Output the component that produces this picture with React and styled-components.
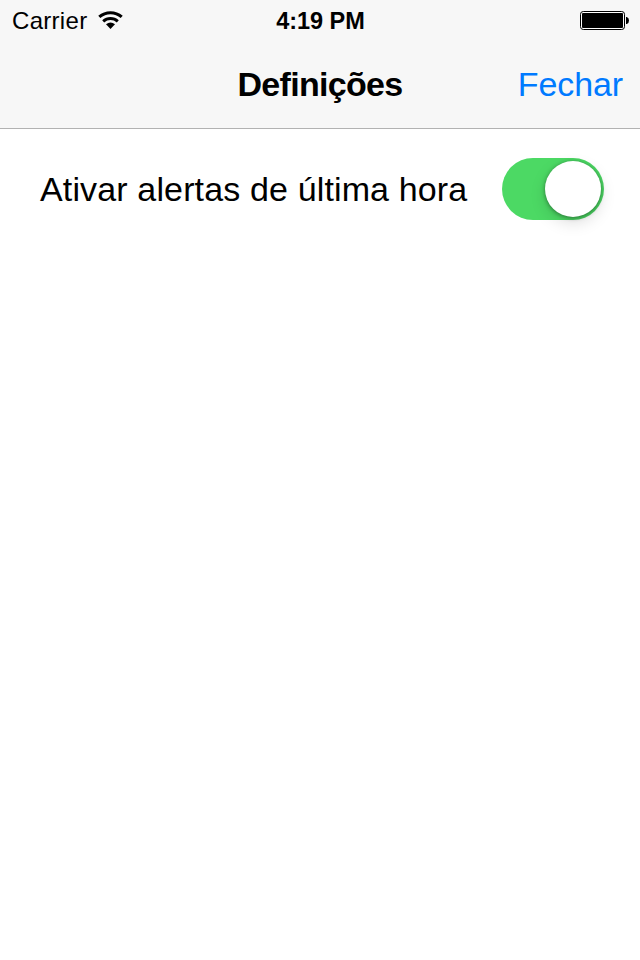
import React, { useState } from 'react'
import styled, { createGlobalStyle } from 'styled-components'

const GlobalStyle = createGlobalStyle`
  body {
    margin: 0;
    background: #fff;
    color: #000;
    font-family: 'Liberation Sans', Arial, sans-serif;
  }
  * {
    box-sizing: border-box;
  }
`

const WifiIcon = () => (
  <svg width="25" height="18" viewBox="0 0 25 18" fill="none" stroke="#000">
    <path d="M1.3 5.9a17 17 0 0 1 22.4 0" strokeWidth="3.1" />
    <path d="M5.2 10.3a11 11 0 0 1 14.6 0" strokeWidth="3" />
    <path d="M8 13.3q4.5-3.4 9 0L12.5 18z" fill="#000" stroke="none" />
  </svg>
)

const BatteryIcon = () => (
  <svg width="49" height="19" viewBox="0 0 49 19">
    <rect x="0.5" y="0.5" width="44" height="18" rx="2.8" fill="#fff" stroke="#000" />
    <rect x="2" y="2" width="41" height="15" rx="1" />
    <path d="M46 6h.8q2.2.8 2.2 3.5t-2.2 3.5H46z" />
  </svg>
)

const Switch = ({ on, label, onChange }) => (
  <Track
    type="button"
    role="switch"
    aria-checked={on}
    aria-label={label}
    $on={on}
    onClick={() => onChange(!on)}
  >
    <Knob />
  </Track>
)

const App = () => {
  const [alerts, setAlerts] = useState(true)

  return (
    <Screen>
      <GlobalStyle />
      <Header>
        <StatusBar>
          <Carrier>
            <span>Carrier</span>
            <WifiIcon />
          </Carrier>
          <Time>4:19 PM</Time>
          <Battery>
            <BatteryIcon />
          </Battery>
        </StatusBar>
        <NavBar>
          <Title>Definições</Title>
          <CloseButton type="button">Fechar</CloseButton>
        </NavBar>
      </Header>
      <SettingRow>
        <SettingLabel>Ativar alertas de última hora</SettingLabel>
        <Switch
          on={alerts}
          label="Ativar alertas de última hora"
          onChange={setAlerts}
        />
      </SettingRow>
    </Screen>
  )
}

export default App

const Screen = styled.div`
  width: 640px;
  height: 960px;
  overflow: hidden;
  background: #fff;
`

const Header = styled.header`
  height: 129px;
  background: #f7f7f7;
  border-bottom: 1px solid #b2b2b2;
`

const StatusBar = styled.div`
  display: grid;
  grid-template-columns: 1fr auto 1fr;
  align-items: start;
  height: 40px;
  padding: 7px 11px 0 12px;
  font-size: 24px;
  line-height: 28px;
`

const Carrier = styled.div`
  display: flex;
  gap: 11px;
  letter-spacing: 0.3px;
  svg {
    margin-top: 4px;
  }
`

const Time = styled.div`
  font-size: 23.5px;
  font-weight: bold;
  letter-spacing: -0.05px;
`

const Battery = styled.div`
  display: flex;
  justify-content: flex-end;
  padding-top: 4px;
`

const NavBar = styled.div`
  display: grid;
  grid-template-columns: 1fr auto 1fr;
  align-items: center;
  height: 88px;
  padding: 0 17px;
`

const Title = styled.h1`
  grid-column: 2;
  margin: 0;
  font-size: 34px;
  line-height: 40px;
  letter-spacing: -0.7px;
`

const CloseButton = styled.button`
  justify-self: end;
  padding: 0;
  border: 0;
  background: none;
  color: #007aff;
  font: inherit;
  font-size: 34px;
  line-height: 40px;
  letter-spacing: -0.1px;
`

const SettingRow = styled.div`
  display: flex;
  align-items: center;
  justify-content: space-between;
  padding: 29px 36px 0 40px;
`

const SettingLabel = styled.span`
  font-size: 34px;
  line-height: 40px;
  letter-spacing: 0.14px;
  white-space: nowrap;
`

const Track = styled.button`
  display: flex;
  align-items: center;
  justify-content: ${props => (props.$on ? 'flex-end' : 'flex-start')};
  width: 102px;
  height: 62px;
  padding: 0 3px;
  border: 0;
  border-radius: 31px;
  background: ${props => (props.$on ? '#4cd964' : '#e5e5e5')};
`

const Knob = styled.span`
  width: 56px;
  height: 56px;
  border-radius: 50%;
  background: #fff;
  box-shadow: 0 1px 4px rgba(0, 0, 0, 0.4), 0 6px 16px rgba(0, 0, 0, 0.13);
`
